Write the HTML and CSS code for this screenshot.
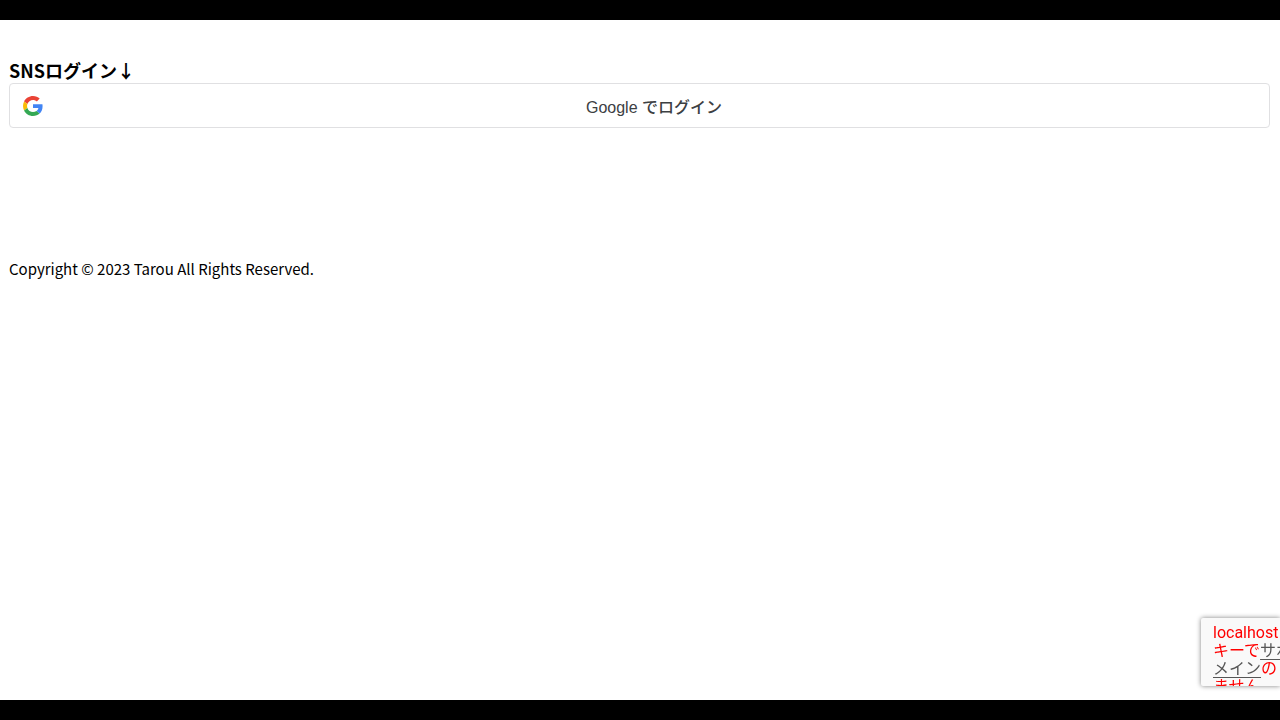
FILE: index.html
```html
<!DOCTYPE html>
<html lang="ja">
<head>
  <meta charset="UTF-8">
  <meta name="viewport" content="width=device-width, initial-scale=1.0">
  <title>ログイン</title>
  <link rel="stylesheet" href="styles.css">
</head>
<body>
  <main class="login">
    <h3>SNSログイン↓</h3>
    <button type="button" class="google-button">
      <svg class="google-icon" viewBox="0 0 48 48" aria-hidden="true">
        <path fill="#EA4335" d="M24 9.5c3.54 0 6.71 1.22 9.21 3.6l6.85-6.85C35.9 2.38 30.47 0 24 0 14.62 0 6.51 5.38 2.56 13.22l7.98 6.19C12.43 13.72 17.74 9.5 24 9.5z"/>
        <path fill="#4285F4" d="M46.98 24.55c0-1.57-.15-3.09-.38-4.55H24v9.02h12.94c-.58 2.96-2.26 5.48-4.78 7.18l7.73 6c4.51-4.18 7.09-10.36 7.09-17.65z"/>
        <path fill="#FBBC05" d="M10.53 28.59c-.48-1.45-.76-2.99-.76-4.59s.27-3.14.76-4.59l-7.98-6.19C.92 16.46 0 20.12 0 24c0 3.88.92 7.54 2.56 10.78l7.97-6.19z"/>
        <path fill="#34A853" d="M24 48c6.48 0 11.93-2.13 15.89-5.81l-7.73-6c-2.15 1.45-4.92 2.3-8.16 2.3-6.26 0-11.57-4.22-13.47-9.91l-7.98 6.19C6.51 42.62 14.62 48 24 48z"/>
      </svg>
      <span class="google-label">Google でログイン</span>
    </button>
  </main>

  <footer>Copyright © 2023 Tarou All Rights Reserved.</footer>

  <!-- reCAPTCHA -->
  <div class="captcha-badge">
    <div>localhost</div>
    <div>キーで<a href="#">サポ</a></div>
    <div><a href="#">メイン</a>の</div>
    <div>ません</div>
  </div>
</body>
</html>
```

FILE: styles.css
```css
* {
  box-sizing: border-box;
}

body {
  display: flex;
  flex-direction: column;
  gap: 128px;
  min-height: 100vh;
  margin: 0;
  padding: 38px 10px 38px 9px;
  border-top: 20px solid #000;
  border-bottom: 20px solid #000;
  background-color: #fff;
  color: #000;
  font-family: "Noto Sans CJK JP", sans-serif;
  font-size: 15px;
  line-height: 25px;
}

h3 {
  margin: 0;
  font-size: 18px;
  line-height: 25px;
}

.google-button {
  display: flex;
  align-items: center;
  width: 100%;
  height: 45px;
  padding: 0 12px 0 13px;
  border: 1px solid #e0e0e2;
  border-radius: 4px;
  background-color: #fff;
  color: #3c4043;
  font-family: "Liberation Sans", "Noto Sans CJK JP", sans-serif;
  font-size: 16px;
  font-weight: 500;
  cursor: pointer;
}

.google-button:hover {
  background-color: #f8faff;
}

.google-icon {
  width: 20px;
  height: 20px;
  margin-right: 8px;
}

.google-label {
  flex: 1;
  text-align: center;
}

/* 右下のバッジ */
.captcha-badge {
  position: fixed;
  right: 0;
  bottom: 34px;
  width: 79px;
  height: 68px;
  padding: 6px 0 0 12px;
  border-radius: 2px 0 0 2px;
  background-color: #f9f9f9;
  box-shadow: 0 0 5px gray;
  color: #f00;
  font-family: Roboto, "Noto Sans CJK JP", sans-serif;
  font-size: 16px;
  line-height: 18px;
  white-space: nowrap;
  overflow: hidden;
}

.captcha-badge a {
  color: #555;
  text-underline-offset: 3px;
}
```
